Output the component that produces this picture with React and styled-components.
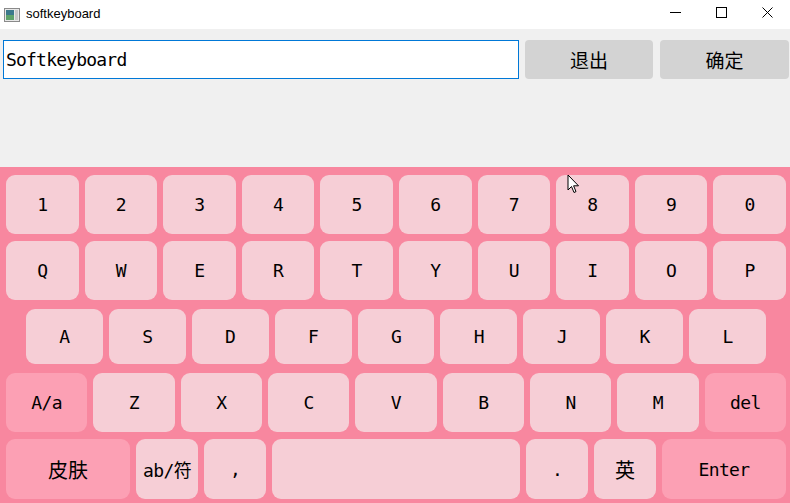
import React from "react";
import styled, { createGlobalStyle } from "styled-components";

const Global = createGlobalStyle`
  html, body { margin: 0; padding: 0; background: #f0f0f0; }
  * { box-sizing: border-box; }
`;

const Window = styled.div`
  position: relative;
  width: 790px;
  height: 503px;
  display: flex;
  flex-direction: column;
  background: #f0f0f0;
  overflow: hidden;
`;

const TitleBar = styled.div`
  height: 29px;
  flex: none;
  background: #ffffff;
  display: flex;
  align-items: center;
  padding-left: 4px;
`;

const TitleText = styled.span`
  margin-left: 6px;
  font-family: "Liberation Sans", Arial, sans-serif;
  font-size: 13px;
  color: #000;
  margin-top: -2px;
`;

const Controls = styled.div`
  margin-left: auto;
  display: flex;
  height: 100%;
`;

const Control = styled.div`
  width: 46px;
  height: 100%;
  display: flex;
  align-items: center;
  justify-content: center;
  padding-bottom: 4px;
`;

const TopArea = styled.div`
  height: 138px;
  flex: none;
  padding: 11px 1px 0 3px;
`;

const InputRow = styled.div`
  display: flex;
  height: 39px;
  gap: 6px;
`;

const Input = styled.div`
  width: 516px;
  height: 39px;
  border: 1px solid #0078d7;
  background: #ffffff;
  display: flex;
  align-items: center;
  padding-left: 2px;
  font-family: "DejaVu Sans Mono", monospace;
  font-size: 18px;
  letter-spacing: -0.8px;
  color: #000;
`;

const TopButton = styled.div`
  width: ${(p) => p.$w}px;
  height: 39px;
  border-radius: 4px;
  background: #d3d3d3;
  display: flex;
  align-items: center;
  justify-content: center;
  font-family: "Noto Sans CJK SC", sans-serif;
  font-size: 19px;
  color: #000;
  margin-left: ${(p) => p.$ml || 0}px;
`;

const Keyboard = styled.div`
  flex: 1;
  background: #f8879f;
  padding-top: 8px;
  display: flex;
  flex-direction: column;
`;

const Row = styled.div`
  display: flex;
  gap: 6px;
  height: ${(p) => p.$h}px;
  margin-top: ${(p) => p.$mt || 0}px;
  padding: 0 ${(p) => p.$pr ?? 4}px 0 ${(p) => p.$pl ?? 6}px;
  flex: none;
`;

const Key = styled.div`
  flex: ${(p) => p.$flex || 1} 1 0;
  min-width: 0;
  border-radius: 9px;
  background: ${(p) => (p.$special ? "#fca0b4" : "#f6ced6")};
  display: flex;
  align-items: center;
  justify-content: center;
  font-family: "DejaVu Sans Mono", "Noto Sans CJK SC", monospace;
  font-size: ${(p) => p.$fs || 18}px;
  letter-spacing: ${(p) => (p.$cjk ? "0" : "-0.6px")};
  color: #000;
  white-space: nowrap;
`;

const Cursor = styled.svg`
  position: absolute;
  left: 567px;
  top: 174px;
`;

const row1 = ["1", "2", "3", "4", "5", "6", "7", "8", "9", "0"];
const row2 = ["Q", "W", "E", "R", "T", "Y", "U", "I", "O", "P"];
const row3 = ["A", "S", "D", "F", "G", "H", "J", "K", "L"];
const row4 = [
  { t: "A/a", s: true },
  { t: "Z" },
  { t: "X" },
  { t: "C" },
  { t: "V" },
  { t: "B" },
  { t: "N" },
  { t: "M" },
  { t: "del", s: true },
];
const row5 = [
  { t: "皮肤", s: true, f: 2, fs: 20, cjk: true },
  { t: "ab/符", f: 1, fs: 18 },
  { t: ",", f: 1 },
  { t: "", f: 4 },
  { t: ".", f: 1 },
  { t: "英", f: 1, fs: 20, cjk: true },
  { t: "Enter", s: true, f: 2 },
];

function AppIcon() {
  return (
    <svg width="16" height="14" viewBox="0 0 16 14">
      <rect x="0.5" y="0.5" width="15" height="13" fill="#e8e8e8" stroke="#8a8a8a" />
      <rect x="2" y="2" width="8" height="10" fill="#3c7a8c" />
      <rect x="2" y="7" width="8" height="5" fill="#5ea36b" />
      <rect x="11" y="2" width="3" height="10" fill="#c9c9c9" />
    </svg>
  );
}

export default function App() {
  return (
    <Window>
      <Global />
      <TitleBar>
        <AppIcon />
        <TitleText>softkeyboard</TitleText>
        <Controls>
          <Control>
            <svg width="11" height="11" viewBox="0 0 11 11">
              <line x1="0" y1="5.5" x2="11" y2="5.5" stroke="#000" strokeWidth="1" />
            </svg>
          </Control>
          <Control>
            <svg width="11" height="11" viewBox="0 0 11 11">
              <rect x="0.5" y="0.5" width="10" height="10" fill="none" stroke="#000" strokeWidth="1" />
            </svg>
          </Control>
          <Control>
            <svg width="11" height="11" viewBox="0 0 11 11">
              <path d="M0.5 0.5 L10.5 10.5 M10.5 0.5 L0.5 10.5" stroke="#000" strokeWidth="1" />
            </svg>
          </Control>
        </Controls>
      </TitleBar>
      <TopArea>
        <InputRow>
          <Input>Softkeyboard</Input>
          <TopButton $w={128}>退出</TopButton>
          <TopButton $w={129} $ml={1}>确定</TopButton>
        </InputRow>
      </TopArea>
      <Keyboard>
        <Row $h={59}>
          {row1.map((k) => (
            <Key key={k}>{k}</Key>
          ))}
        </Row>
        <Row $h={59} $mt={7}>
          {row2.map((k) => (
            <Key key={k}>{k}</Key>
          ))}
        </Row>
        <Row $h={55} $mt={9} $pl={26} $pr={24}>
          {row3.map((k) => (
            <Key key={k}>{k}</Key>
          ))}
        </Row>
        <Row $h={59} $mt={9}>
          {row4.map((k) => (
            <Key key={k.t} $special={k.s}>
              {k.t}
            </Key>
          ))}
        </Row>
        <Row $h={60} $mt={7}>
          {row5.map((k, i) => (
            <Key key={i} $special={k.s} $flex={k.f} $fs={k.fs} $cjk={k.cjk}>
              {k.t}
            </Key>
          ))}
        </Row>
      </Keyboard>
      <Cursor width="13" height="20" viewBox="0 0 13 20">
        <path
          d="M1 1 L1 16 L4.5 12.5 L7 18.5 L9 17.6 L6.6 11.8 L11.5 11.8 Z"
          fill="#fff"
          stroke="#000"
          strokeWidth="1"
          strokeLinejoin="miter"
        />
      </Cursor>
    </Window>
  );
}
